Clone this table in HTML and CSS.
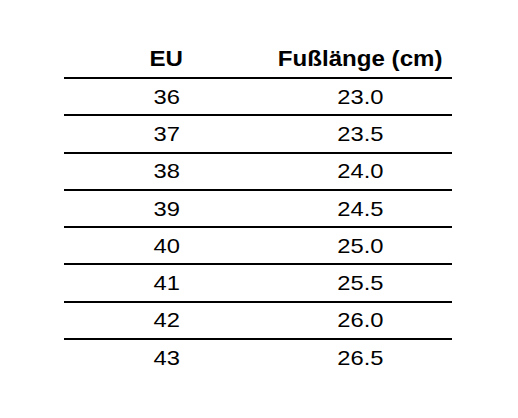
FILE: index.html
```html
<!DOCTYPE html>
<html lang="de">
<head>
<meta charset="utf-8">
<title>Größentabelle</title>
<link rel="stylesheet" href="styles.css">
</head>
<body>
<div class="size-table">
  <div class="row head">
    <div class="cell"><span class="txt">EU</span></div>
    <div class="cell"><span class="txt">Fußlänge (cm)</span></div>
  </div>
  <div class="row"><div class="cell"><span class="txt">36</span></div><div class="cell"><span class="txt">23.0</span></div></div>
  <div class="row"><div class="cell"><span class="txt">37</span></div><div class="cell"><span class="txt">23.5</span></div></div>
  <div class="row"><div class="cell"><span class="txt">38</span></div><div class="cell"><span class="txt">24.0</span></div></div>
  <div class="row"><div class="cell"><span class="txt">39</span></div><div class="cell"><span class="txt">24.5</span></div></div>
  <div class="row"><div class="cell"><span class="txt">40</span></div><div class="cell"><span class="txt">25.0</span></div></div>
  <div class="row"><div class="cell"><span class="txt">41</span></div><div class="cell"><span class="txt">25.5</span></div></div>
  <div class="row"><div class="cell"><span class="txt">42</span></div><div class="cell"><span class="txt">26.0</span></div></div>
  <div class="row last"><div class="cell"><span class="txt">43</span></div><div class="cell"><span class="txt">26.5</span></div></div>
</div>
</body>
</html>
```

FILE: styles.css
```css
html, body {
  margin: 0;
  background: #ffffff;
}

body {
  padding: 41.7px 0 0 64px;
  font-family: "Liberation Sans", Arial, sans-serif;
  color: #000000;
}

.size-table {
  width: 388px;
}

.row {
  display: grid;
  grid-template-columns: 205px 183px;
  height: 35.3px;
  border-bottom: 2px solid #000000;
  align-items: center;
}

.row.last {
  border-bottom: none;
}

.cell {
  display: flex;
  justify-content: center;
  align-items: center;
  font-size: 21px;
  line-height: 24px;
}

.txt {
  display: inline-block;
  transform: scaleX(1.13);
  white-space: nowrap;
}

.head .cell {
  font-size: 22px;
  font-weight: bold;
}

.head .txt {
  transform: scaleX(1.095);
}
```
